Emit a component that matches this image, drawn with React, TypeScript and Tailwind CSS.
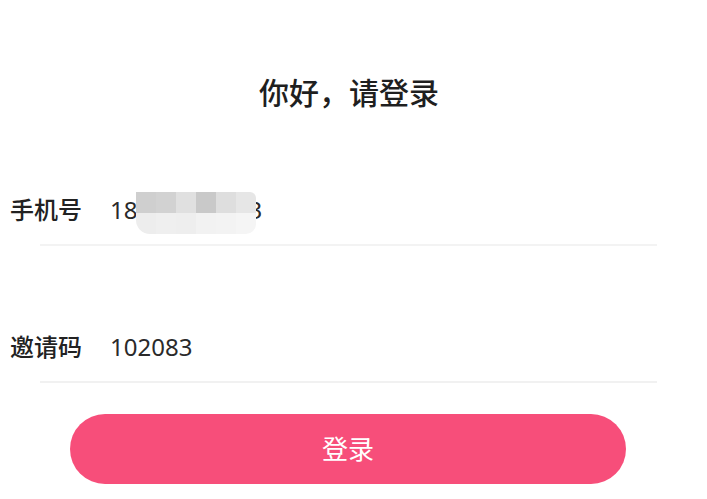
import React from "react";

const font = { fontFamily: '"Noto Sans", "Noto Sans CJK SC", sans-serif' };

// mosaic cells covering the hidden part of the phone number
const mosaicTop = ["#cfcfcf", "#d2d2d2", "#e0e0e0", "#c9c9c9", "#dedede", "#e6e6e6"];
const mosaicBottom = ["#ededed", "#efefef", "#eeeeee", "#f2f2f2", "#f3f3f3", "#f5f5f5"];

function Mosaic() {
  return (
    <span className="relative z-10 inline-flex flex-col h-[42px] w-[120px] overflow-hidden rounded-bl-[14px] rounded-br-[10px] rounded-tr-[6px]">
      <span className="flex h-[21px]">
        {mosaicTop.map((c, i) => (
          <span key={i} className="h-full w-[20px]" style={{ backgroundColor: c }} />
        ))}
      </span>
      <span className="flex h-[21px]">
        {mosaicBottom.map((c, i) => (
          <span key={i} className="h-full w-[20px]" style={{ backgroundColor: c }} />
        ))}
      </span>
    </span>
  );
}

export default function App() {
  return (
    <div className="w-[707px] h-[499px] bg-white overflow-hidden" style={font}>
      <h1 className="pt-[73px] pr-[9px] h-[113px] text-center text-[30px] leading-[40px] text-[#1f1f1f] font-medium">
        你好，请登录
      </h1>

      {/* phone row */}
      <div className="mt-[77px] flex items-center h-[40px] pl-[10px]">
        <span className="w-[100px] text-[24px] text-[#222] font-medium">手机号</span>
        <span className="flex items-center text-[24px] text-[#2a2a2a]">
          <span>18</span>
          <span className="ml-[-1px]">
            <Mosaic />
          </span>
          <span className="relative ml-[-8px]">3</span>
        </span>
      </div>
      <div className="mt-[14px] ml-[40px] w-[617px] h-[2px] bg-[#f3f3f3]" />

      {/* invite row */}
      <div className="mt-[81px] flex items-center h-[40px] pl-[10px]">
        <span className="w-[100px] text-[24px] text-[#222] font-medium">邀请码</span>
        <span className="text-[24px] text-[#2a2a2a]">102083</span>
      </div>
      <div className="mt-[14px] ml-[40px] w-[617px] h-[2px] bg-[#f1f1f1]" />

      <button
        type="button"
        className="mt-[31px] ml-[70px] w-[556px] h-[70px] rounded-full bg-[#f74e7a] text-white text-[26px] flex items-center justify-center"
      >
        登录
      </button>
    </div>
  );
}
